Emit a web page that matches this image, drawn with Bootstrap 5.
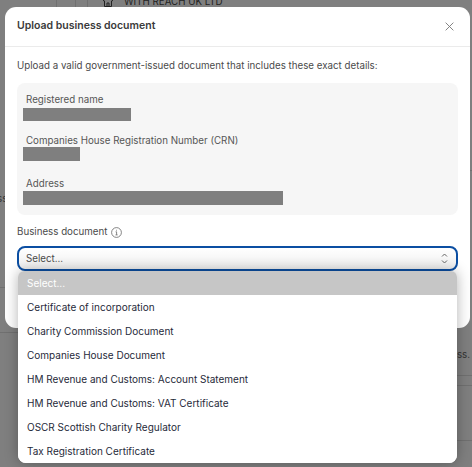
<!DOCTYPE html>
<html lang="en">

<head>
    <meta charset="UTF-8">
    <meta name="viewport" content="width=device-width, initial-scale=1.0">
    <title>Upload business document</title>
    <link href="https://cdn.jsdelivr.net/npm/bootstrap@5.3.3/dist/css/bootstrap.min.css" rel="stylesheet"
        crossorigin="anonymous">
    <style>
        html, body { height: 467px; overflow: hidden; }
        body { background: #7f7f7f; font-family: Inter, "Liberation Sans", sans-serif; font-size: 9.75px; color: #3d3d3d; position: relative; }

        /* page behind the dialog */
        .behind-name { position: absolute; left: 124px; top: -5px; font-size: 9.750px; line-height: 14px; color: #222; white-space: nowrap; }
        .behind-icon { position: absolute; left: 102px; top: -3px; }
        .behind-line { position: absolute; background: #707070; }
        .line-a { left: 56px; top: 0; width: 1px; height: 7px; }
        .line-b { left: 75px; top: 0; width: 1px; height: 7px; }
        .line-c { left: 87px; top: 0; width: 1px; height: 7px; }
        .line-d { left: 457px; top: 375px; width: 15px; height: 1px; }
        .line-e { left: 457px; top: 385px; width: 15px; height: 1px; }
        .line-f { left: 457px; top: 440px; width: 15px; height: 1px; }
        .line-g { left: 0; top: 287px; width: 5px; height: 1px; }
        .line-h { left: 0; top: 332px; width: 18px; height: 1px; }
        .line-i { left: 470px; top: 170px; width: 2px; height: 1px; }
        .behind-txt { position: absolute; color: #333; line-height: 14px; white-space: nowrap; }
        .txt-left { left: -3px; top: 192px; }
        .txt-right { right: 2px; top: 348px; }

        .doc-modal { position: relative; width: 465px; margin: 7px 0 0 5px; height: 321px; border: 0; border-radius: 11px; background: #fff; }
        .doc-modal .modal-header { height: 40px; padding: 0 12px; border-bottom: 1px solid #ebebeb; }
        .doc-modal .modal-title { font-size: 10.500px; font-weight: 600; line-height: 14px; color: #3a3a3a; margin-top: -1px; }
        .doc-modal .modal-body { padding: 0 12px; }
        .intro { margin: 12px 0 0; line-height: 14px; color: #4a4a4a; }
        .details-box { margin-top: 10px; height: 132px; padding: 10px 9px 0 6px; border-radius: 8px; background: #f6f6f6; }
        .details-box dt { font-weight: 400; line-height: 14px; margin: 0 0 0 3px; color: #555; }
        .details-box dd { background: #7f7f7f; margin-bottom: 0; }
        .details-box dt.crn-label { margin-top: 13px; }
        .details-box dt.address-label { margin-top: 16px; }
        .redact-name { width: 108px; height: 13px; margin-top: 1px; }
        .redact-crn { width: 57px; height: 14px; margin-top: -1px; }
        .redact-address { width: 260px; height: 14px; }
        .field-label { margin-top: 10px; line-height: 14px; color: #4a4a4a; }
        .fake-select { margin-top: 7px; height: 25px; padding: 0 8px 0 7px; border: 2px solid #0b4ea2; border-radius: 8px; background: linear-gradient(#fff, #efefef); line-height: 14px; color: #4a4a4a; }
        .doc-menu { position: absolute; left: 18px; top: 271px; width: 439px; border-radius: 6px 6px 8px 8px; overflow: hidden; background: #fff; box-shadow: 0 0 14px rgba(0, 0, 0, .3); z-index: 2; }
        .doc-menu .list-group-item { height: 24px; padding: 0 9px; border: 0; border-radius: 0; font-size: 10px; line-height: 24px; color: #1f2a3a; background: #fff; }
        .doc-menu .list-group-item.is-current { background: #c6c6c6; color: #fff; }
    </style>
    <script src="https://cdn.jsdelivr.net/npm/bootstrap@5.3.3/dist/js/bootstrap.bundle.min.js"
        crossorigin="anonymous"></script>
</head>

<body>
    <!-- page behind -->
    <div class="behind-line line-a"></div>
    <div class="behind-line line-b"></div>
    <div class="behind-line line-c"></div>
    <div class="behind-line line-d"></div>
    <div class="behind-line line-e"></div>
    <div class="behind-line line-f"></div>
    <div class="behind-line line-g"></div>
    <div class="behind-line line-h"></div>
    <div class="behind-line line-i"></div>
    <svg class="behind-icon" width="12" height="10" viewBox="0 0 12 10" fill="none" stroke="#222">
        <path d="M1 4 6 0l5 4M2.500 4v5.500h7V4M5 9.500V6h2v3.500" />
    </svg>
    <div class="behind-name">WITH REACH UK LTD</div>
    <div class="behind-txt txt-left">ss</div>
    <div class="behind-txt txt-right">ss.</div>

    <div class="modal-content doc-modal">
        <div class="modal-header d-flex align-items-center justify-content-between">
            <h5 class="modal-title">Upload business document</h5>
            <svg class="me-1" width="9" height="9" viewBox="0 0 10 10" stroke="#777" stroke-width="1">
                <path d="M.700.700l8.600 8.600M9.300.700.700 9.300" />
            </svg>
        </div>
        <div class="modal-body">
            <p class="intro">Upload a valid government-issued document that includes these exact details:</p>
            <dl class="details-box mb-0">
                <dt>Registered name</dt>
                <dd class="redact-name"></dd>
                <dt class="crn-label">Companies House Registration Number (CRN)</dt>
                <dd class="redact-crn"></dd>
                <dt class="address-label">Address</dt>
                <dd class="redact-address"></dd>
            </dl>
            <div class="field-label d-flex align-items-center gap-1">
                Business document
                <svg width="11" height="11" viewBox="0 0 11 11" fill="none" stroke="#666" stroke-width=".8">
                    <circle cx="5.500" cy="5.500" r="4.900" />
                    <path d="M4.600 4.800h1v3M4.500 7.900h2.100M5.500 2.800v.8" />
                </svg>
            </div>
            <div class="fake-select d-flex align-items-center justify-content-between">
                <span>Select...</span>
                <svg width="7" height="11" viewBox="0 0 7 11" fill="none" stroke="#666" stroke-width="1">
                    <path d="M1 3.500 3.500 1 6 3.500M1 7.500 3.500 10 6 7.500" />
                </svg>
            </div>
        </div>
    </div>

    <div class="list-group doc-menu">
        <div class="list-group-item is-current">Select...</div>
        <div class="list-group-item">Certificate of incorporation</div>
        <div class="list-group-item">Charity Commission Document</div>
        <div class="list-group-item">Companies House Document</div>
        <div class="list-group-item">HM Revenue and Customs: Account Statement</div>
        <div class="list-group-item">HM Revenue and Customs: VAT Certificate</div>
        <div class="list-group-item">OSCR Scottish Charity Regulator</div>
        <div class="list-group-item">Tax Registration Certificate</div>
    </div>
</body>

</html>
